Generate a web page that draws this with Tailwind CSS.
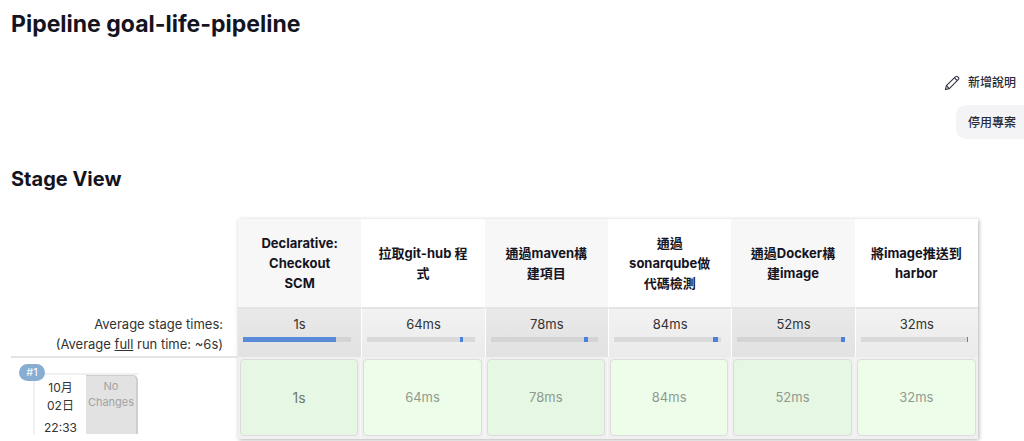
<!DOCTYPE html>
<html lang="zh-Hant">
<head>
  <meta charset="UTF-8">
  <title>Pipeline goal-life-pipeline</title>
  <script src="https://cdn.jsdelivr.net/npm/@tailwindcss/browser@4"></script>
</head>
<body class="bg-white text-[#14141f] font-['Inter','Noto_Sans_CJK_TC',sans-serif] h-[441px] w-[1024px] overflow-hidden">
  <!-- Title -->
  <h1 class="pl-[11px] pt-[10px] h-[72px] text-[23px] leading-[28px] font-bold">Pipeline goal-life-pipeline</h1>

  <!-- Side actions -->
  <div class="flex flex-col items-end">
    <a class="flex items-center h-[22px] pr-[8px] text-[12px] font-medium text-[#2b2b38]">
      <svg class="w-[16px] h-[16px] mr-[8px]" viewBox="0 0 16 16" fill="none" stroke="#333340" stroke-width="1.1" stroke-linejoin="round"><path d="M1.5 14.5l.9-3.8L11.6 1.6a1.3 1.3 0 0 1 1.9 0l.9.9a1.3 1.3 0 0 1 0 1.9l-9.1 9.2z"/><path d="M2.4 10.7l2.9 2.9M10.5 2.8l2.8 2.8"/></svg>
      新增說明
    </a>
    <a class="flex items-center mt-[11px] h-[34px] pl-[12px] pr-[8px] pt-[2px] bg-[#f4f4f7] rounded-l-[10px] text-[12px] font-medium text-[#2b2b38]">停用專案</a>
  </div>

  <h2 class="pl-[11px] mt-[26px] h-[54px] text-[20px] leading-[28px] font-bold">Stage View</h2>

  <!-- Stage table -->
  <div class="ml-[11px] flex items-start text-[13px]">
    <div class="w-[227px] shrink-0">
      <div class="h-[88px]"></div>
      <div class="h-[49px] pr-[15px] pt-[7px] text-right text-[13px] leading-[20px] text-[#333]">
        <div>Average stage times:</div>
        <div>(Average <span class="underline">full</span> run time: ~6s)</div>
      </div>
      <div class="relative h-[78px] border-t-2 border-[#e4e4e4] overflow-hidden">
        <span class="absolute left-[8px] top-[6px] z-10 w-[26px] h-[17px] rounded-full bg-[#87add3] text-white text-[11px] leading-[17px] text-center">#1</span>
        <div class="ml-[22px] mt-[15px] flex w-[105px] h-[70px] border-l-2 border-t-2 border-[#f0f0f0] rounded-tl-[3px]">
          <div class="w-[51px] text-center text-[12px] text-[#333] pt-[4px]">
            <div class="leading-[18px]">10月</div>
            <div class="leading-[18px]">02日</div>
            <div class="leading-[18px] mt-[4px]">22:33</div>
          </div>
          <div class="w-[52px] h-full pt-[2px] bg-[#e2e2e2] border-r-2 border-t border-[#cfcfcf] rounded-tr-[5px] text-center text-[11px] leading-[16px] text-[#a3a3a3]">
            <div>No</div>
            <div>Changes</div>
          </div>
        </div>
      </div>
    </div>

    <div class="w-[740px] shrink-0 shadow-[1px_1px_4px_rgba(0,0,0,0.3)] grid grid-cols-6 bg-white">
      <!-- Header row -->
      <div class="h-[88px] flex items-center justify-center text-center text-[13px] leading-[20px] font-bold bg-[#f7f7f7]"><span>Declarative:<br>Checkout<br>SCM</span></div>
      <div class="h-[88px] flex items-center justify-center text-center text-[13px] leading-[20px] font-bold bg-white"><span>拉取git-hub 程<br>式</span></div>
      <div class="h-[88px] flex items-center justify-center text-center text-[13px] leading-[20px] font-bold bg-[#f7f7f7]"><span>通過maven構<br>建項目</span></div>
      <div class="h-[88px] flex items-center justify-center text-center text-[13px] leading-[20px] font-bold bg-white"><span>通過<br>sonarqube做<br>代碼檢測</span></div>
      <div class="h-[88px] flex items-center justify-center text-center text-[13px] leading-[20px] font-bold bg-[#f7f7f7]"><span>通過Docker構<br>建image</span></div>
      <div class="h-[88px] flex items-center justify-center text-center text-[13px] leading-[20px] font-bold bg-white"><span>將image推送到<br>harbor</span></div>

      <!-- Average row -->
      <div class="h-[50px] pt-[6px] border-t-2 border-[#e4e4e4] text-center text-[13px] leading-[18px] text-[#333] bg-gradient-to-b from-[#e9e9e9] to-[#e2e2e2]">1s
        <div class="ml-[5px] mr-[10px] mt-[4px] h-[5px] bg-[#d4d4d4]"><div class="h-full w-[86%] bg-[#5b8ad8]"></div></div>
      </div>
      <div class="h-[50px] pt-[6px] border-t-2 border-[#e4e4e4] border-l border-l-white text-center text-[13px] leading-[18px] text-[#333] bg-gradient-to-b from-[#f2f2f2] to-[#ebebeb]">64ms
        <div class="relative ml-[5px] mr-[10px] mt-[4px] h-[5px] bg-[#dadada]"><div class="absolute left-[86%] w-[3px] h-full bg-[#4a80e0]"></div></div>
      </div>
      <div class="h-[50px] pt-[6px] border-t-2 border-[#e4e4e4] border-l border-l-white text-center text-[13px] leading-[18px] text-[#333] bg-gradient-to-b from-[#e9e9e9] to-[#e2e2e2]">78ms
        <div class="relative ml-[5px] mr-[10px] mt-[4px] h-[5px] bg-[#d4d4d4]"><div class="absolute left-[87%] w-[4px] h-full bg-[#4a80e0]"></div></div>
      </div>
      <div class="h-[50px] pt-[6px] border-t-2 border-[#e4e4e4] border-l border-l-white text-center text-[13px] leading-[18px] text-[#333] bg-gradient-to-b from-[#f2f2f2] to-[#ebebeb]">84ms
        <div class="relative ml-[5px] mr-[10px] mt-[4px] h-[5px] bg-[#dadada]"><div class="absolute left-[92%] w-[5px] h-full bg-[#4a80e0]"></div></div>
      </div>
      <div class="h-[50px] pt-[6px] border-t-2 border-[#e4e4e4] border-l border-l-white text-center text-[13px] leading-[18px] text-[#333] bg-gradient-to-b from-[#e9e9e9] to-[#e2e2e2]">52ms
        <div class="relative ml-[5px] mr-[10px] mt-[4px] h-[5px] bg-[#d4d4d4]"><div class="absolute right-0 w-[4px] h-full bg-[#4a80e0]"></div></div>
      </div>
      <div class="h-[50px] pt-[6px] border-t-2 border-[#e4e4e4] border-l border-l-white text-center text-[13px] leading-[18px] text-[#333] bg-gradient-to-b from-[#f2f2f2] to-[#ebebeb]">32ms
        <div class="relative ml-[5px] mr-[10px] mt-[4px] h-[5px] bg-[#dadada]"><div class="absolute right-0 w-[1px] h-full bg-[#4a80e0]"></div></div>
      </div>

      <!-- Build #1 row -->
      <div class="h-[82px] p-[2px] bg-[#f0f0f0] border-r border-[#f7f7f7]"><div class="h-[77px] flex items-center justify-center rounded-[4px] border border-[#dcdcdc] bg-[#e6f7e3] text-[14px] text-[#6e7a6e]">1s</div></div>
      <div class="h-[82px] p-[2px] bg-[#f0f0f0] border-r border-[#f7f7f7]"><div class="h-[77px] flex items-center justify-center rounded-[4px] border border-[#dcdcdc] bg-[#edfdea] text-[13px] text-[#8f9a8f]">64ms</div></div>
      <div class="h-[82px] p-[2px] bg-[#f0f0f0] border-r border-[#f7f7f7]"><div class="h-[77px] flex items-center justify-center rounded-[4px] border border-[#dcdcdc] bg-[#e6f7e3] text-[13px] text-[#8f9a8f]">78ms</div></div>
      <div class="h-[82px] p-[2px] bg-[#f0f0f0] border-r border-[#f7f7f7]"><div class="h-[77px] flex items-center justify-center rounded-[4px] border border-[#dcdcdc] bg-[#edfdea] text-[13px] text-[#8f9a8f]">84ms</div></div>
      <div class="h-[82px] p-[2px] bg-[#f0f0f0] border-r border-[#f7f7f7]"><div class="h-[77px] flex items-center justify-center rounded-[4px] border border-[#dcdcdc] bg-[#e6f7e3] text-[13px] text-[#8f9a8f]">52ms</div></div>
      <div class="h-[82px] p-[2px] bg-[#f0f0f0]"><div class="h-[77px] flex items-center justify-center rounded-[4px] border border-[#dcdcdc] bg-[#edfdea] text-[13px] text-[#8f9a8f]">32ms</div></div>
    </div>
  </div>
</body>
</html>
